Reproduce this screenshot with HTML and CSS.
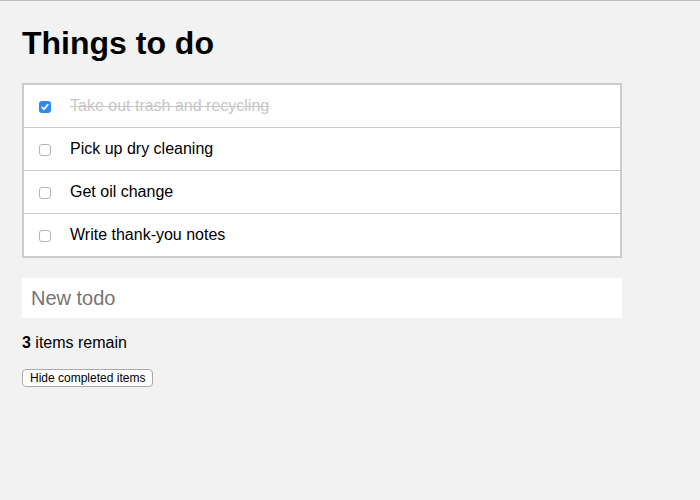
FILE: index.html
```html
<!DOCTYPE html>
<html>
<head>
<meta charset="utf-8">
<link rel="stylesheet" href="styles.css">
</head>
<body>
<div class="app">
  <h1 class="title">Things to do</h1>
  <ul class="todo-list">
    <li class="todo done"><input type="checkbox" class="check" checked><span class="label">Take out trash and recycling</span></li>
    <li class="todo"><input type="checkbox" class="check"><span class="label">Pick up dry cleaning</span></li>
    <li class="todo"><input type="checkbox" class="check"><span class="label">Get oil change</span></li>
    <li class="todo"><input type="checkbox" class="check"><span class="label">Write thank-you notes</span></li>
  </ul>
  <input class="new-todo" type="text" placeholder="New todo">
  <p class="remain"><strong>3</strong> items remain</p>
  <button class="hide-btn">Hide completed items</button>
</div>
</body>
</html>
```
FILE: styles.css
```css
html, body {
  margin: 0;
  padding: 0;
}
body {
  background: #f2f2f2;
  border-top: 1px solid #bdbdbd;
  height: 499px;
  font-family: "Liberation Sans", Arial, Helvetica, sans-serif;
  color: #000;
}
.app {
  padding: 0 22px;
  display: flex;
  flex-direction: column;
  align-items: flex-start;
}
.title {
  margin: 24px 0 21px;
  font-size: 32px;
  line-height: 37px;
  font-weight: bold;
}
.todo-list {
  list-style: none;
  margin: 0;
  padding: 0;
  width: 600px;
  box-sizing: border-box;
  border: 2px solid #cccccc;
  background: #fff;
}
.todo {
  display: flex;
  align-items: center;
  height: 42px;
  padding-left: 15px;
  border-bottom: 1px solid #cccccc;
  font-size: 16px;
}
.todo:last-child {
  border-bottom: none;
}
.check {
  -webkit-appearance: none;
  appearance: none;
  margin: 0;
  width: 12px;
  height: 12px;
  box-sizing: border-box;
  border: 1px solid #b4b4b4;
  border-radius: 3px;
  background: #fff;
  position: relative;
  top: 1px;
}
.check:checked {
  border: none;
  background: #2a8af6 url("data:image/svg+xml;utf8,<svg xmlns='http://www.w3.org/2000/svg' width='12' height='12' viewBox='0 0 12 12'><path d='M3.2 6.3 L5.1 8.3 L8.8 3.6' fill='none' stroke='white' stroke-width='1.7' stroke-linecap='round' stroke-linejoin='round'/></svg>") no-repeat center;
}
.label {
  margin-left: 19px;
}
.done .label {
  color: #c8c8c8;
  text-decoration: line-through;
}
.new-todo {
  margin: 20px 0 0;
  width: 600px;
  height: 40px;
  box-sizing: border-box;
  border: none;
  outline: none;
  background: #fff;
  padding: 0 9px;
  font-family: "Liberation Sans", Arial, Helvetica, sans-serif;
  font-size: 20px;
}
.new-todo::placeholder {
  color: #757575;
}
.remain {
  margin: 16px 0 0;
  font-size: 16px;
  line-height: 18px;
}
.hide-btn {
  margin-top: 17px;
  height: 18px;
  padding: 0 7px;
  background: #fff;
  border: 1px solid #aaaaaa;
  border-radius: 4px;
  font-family: "Liberation Sans", Arial, Helvetica, sans-serif;
  font-size: 12px;
  line-height: 16px;
  color: #000;
}
```
